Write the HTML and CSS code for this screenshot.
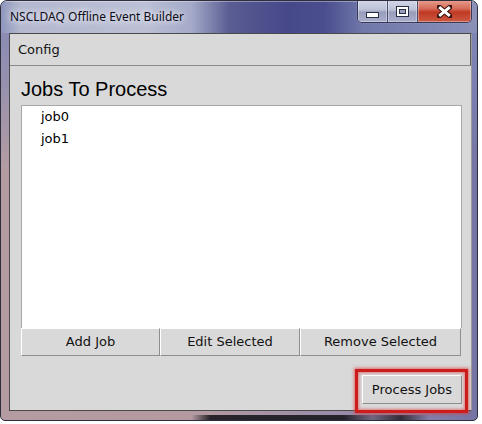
FILE: index.html
```html
<!DOCTYPE html>
<html>
<head>
<meta charset="utf-8">
<link rel="stylesheet" href="styles.css">
</head>
<body>
<div class="window">
  <div class="titlebar">
    <span class="title">NSCLDAQ Offline Event Builder</span>
    <div class="caption">
      <div class="cbtn cmin">
        <svg width="13" height="6" viewBox="0 0 13 6"><rect x="0.5" y="0.5" width="12" height="5" fill="#fff" stroke="#2a2e44"/></svg>
      </div>
      <div class="cbtn cmax">
        <svg width="13" height="11" viewBox="0 0 13 11"><rect x="0.5" y="0.5" width="12" height="10" fill="#fff" stroke="#2a2e44"/><rect x="3.5" y="3.5" width="6" height="4" fill="#9aa0bc" stroke="#2a2e44"/></svg>
      </div>
      <div class="cbtn cclose">
        <svg width="15" height="13" viewBox="0 0 15 13"><path d="M2 2 L13 11 M13 2 L2 11" stroke="#3a1410" stroke-width="5" stroke-linecap="square"/><path d="M2.2 2.2 L12.8 10.8 M12.8 2.2 L2.2 10.8" stroke="#fff" stroke-width="3"/></svg>
      </div>
    </div>
  </div>
  <div class="client">
    <div class="menubar"><span class="menu">Config</span></div>
    <div class="content">
      <h1 class="heading">Jobs To Process</h1>
      <div class="listbox">
        <div class="item">job0</div>
        <div class="item">job1</div>
      </div>
      <div class="btnrow">
        <button class="btn b1">Add Job</button>
        <button class="btn b2">Edit Selected</button>
        <button class="btn b3">Remove Selected</button>
      </div>
      <div class="footer">
        <div class="procwrap">
          <button class="btn proc">Process Jobs</button>
          <div class="highlight"></div>
        </div>
      </div>
    </div>
  </div>
</div>
</body>
</html>
```

FILE: styles.css
```css
html, body {
  margin: 0;
  padding: 0;
  background: #ffffff;
}
body {
  width: 482px;
  height: 424px;
  overflow: hidden;
}
.window {
  box-sizing: border-box;
  width: 478px;
  height: 421px;
  border: 1px solid #2e2e3c;
  border-radius: 7px 7px 5px 5px;
  background:
    linear-gradient(90deg, rgba(0,0,0,0) 0%, rgba(0,0,0,0) 40%, rgba(24,22,28,0.9) 44%, rgba(24,22,28,0.9) 72%, rgba(90,80,100,0.6) 78%, rgba(24,22,28,0.8) 84%, rgba(0,0,0,0) 90%) left bottom / 100% 5px no-repeat,
    linear-gradient(180deg, rgba(128,136,184,0.95) 0%, rgba(128,136,184,0.6) 18%, rgba(128,136,184,0) 40%),
    linear-gradient(90deg, #b49ca2 0%, #b49aa0 40%, #9088ac 80%, #7474a4 100%);
  overflow: hidden;
  display: flex;
  flex-direction: column;
}
.titlebar {
  height: 32px;
  flex: none;
  display: flex;
  justify-content: space-between;
  align-items: flex-start;
  background:
    linear-gradient(90deg, #8e96bc 0%, #b4b8d0 4%, #bcc0d6 30%, #a4aac8 40%, #5a5c92 48%, #46488a 60%, #4a4e8e 68%, #7078aa 76%, #8a90b8 100%);
  box-shadow: inset 0 1px 0 rgba(255,255,255,0.35);
}
.title {
  font-family: "Noto Sans", "Open Sans", sans-serif;
  font-size: 12px;
  color: #0c0c18;
  margin: 8px 0 0 9px;
  line-height: 16px;
  text-shadow: 0 0 6px rgba(255,255,255,0.9), 0 0 10px rgba(255,255,255,0.7);
}
.caption {
  display: flex;
  margin: -1px 5px 0 0;
  height: 22px;
  border: 1px solid #363a58;
  border-top: none;
  border-radius: 0 0 5px 5px;
  overflow: hidden;
  box-shadow: 0 0 1px rgba(255,255,255,0.6);
}
.cbtn {
  display: flex;
  align-items: center;
  justify-content: center;
  height: 22px;
  box-shadow: inset 0 0 0 1px rgba(255,255,255,0.35);
}
.cmin, .cmax {
  width: 29px;
  background: linear-gradient(180deg, #d4d8e8 0%, #bcc0d6 45%, #989eba 55%, #a8aecc 100%);
  border-right: 1px solid #4a4e6c;
}
.cmin svg { margin-top: 7px; }
.cclose {
  width: 53px;
  background: linear-gradient(180deg, #e8a090 0%, #d66a58 40%, #c03822 55%, #cc5a44 100%);
}
.client {
  box-sizing: border-box;
  width: 463px;
  height: 378px;
  margin-left: 8px;
  border: 1px solid #4a4a4a;
  border-right-color: #9a9a9a;
  background: #d9d9d9;
  display: flex;
  flex-direction: column;
  flex: none;
}
.menubar {
  box-sizing: border-box;
  height: 32px;
  flex: none;
  border-bottom: 1px solid #8a8a8a;
  border-right: 1px solid #5a5a5a;
  display: flex;
  align-items: center;
  padding-left: 8px;
}
.menu {
  font-family: "DejaVu Sans", sans-serif;
  font-size: 13px;
  color: #111;
}
.content {
  flex: 1;
  padding: 0 9px 0 11px;
  display: flex;
  flex-direction: column;
}
.heading {
  font-family: "Liberation Sans", Arial, sans-serif;
  font-weight: normal;
  font-size: 20px;
  line-height: 23px;
  margin: 12px 0 4px 0;
  color: #000;
}
.listbox {
  box-sizing: border-box;
  height: 223px;
  background: #fff;
  border: 1px solid #a8a8a8;
  border-bottom: none;
  padding: 0 0 0 19px;
}
.item {
  font-family: "DejaVu Sans", sans-serif;
  font-size: 13px;
  line-height: 22px;
  color: #000;
}
.btnrow {
  display: flex;
  height: 28px;
}
.btn {
  box-sizing: border-box;
  font-family: "DejaVu Sans", sans-serif;
  font-size: 13px;
  color: #111;
  background: #d9d9d9;
  border: 1px solid;
  border-color: #ffffff #8e8e8e #8e8e8e #ffffff;
  padding: 0 0 1px 0;
  margin: 0;
  height: 28px;
}
.b1 { width: 139px; }
.b2 { width: 140px; }
.b3 { width: 161px; }
.footer {
  display: flex;
  justify-content: flex-end;
  margin-top: 19px;
}
.procwrap {
  position: relative;
  display: flex;
}
.proc {
  width: 100px;
  height: 29px;
}
.highlight {
  position: absolute;
  left: -7px;
  right: -6px;
  top: -6px;
  bottom: -9px;
  border: 3px solid #cc1c1c;
  box-shadow: 0 0 3px 1px rgba(220,60,60,0.7), inset 0 0 3px 1px rgba(220,60,60,0.6);
  pointer-events: none;
}
```
